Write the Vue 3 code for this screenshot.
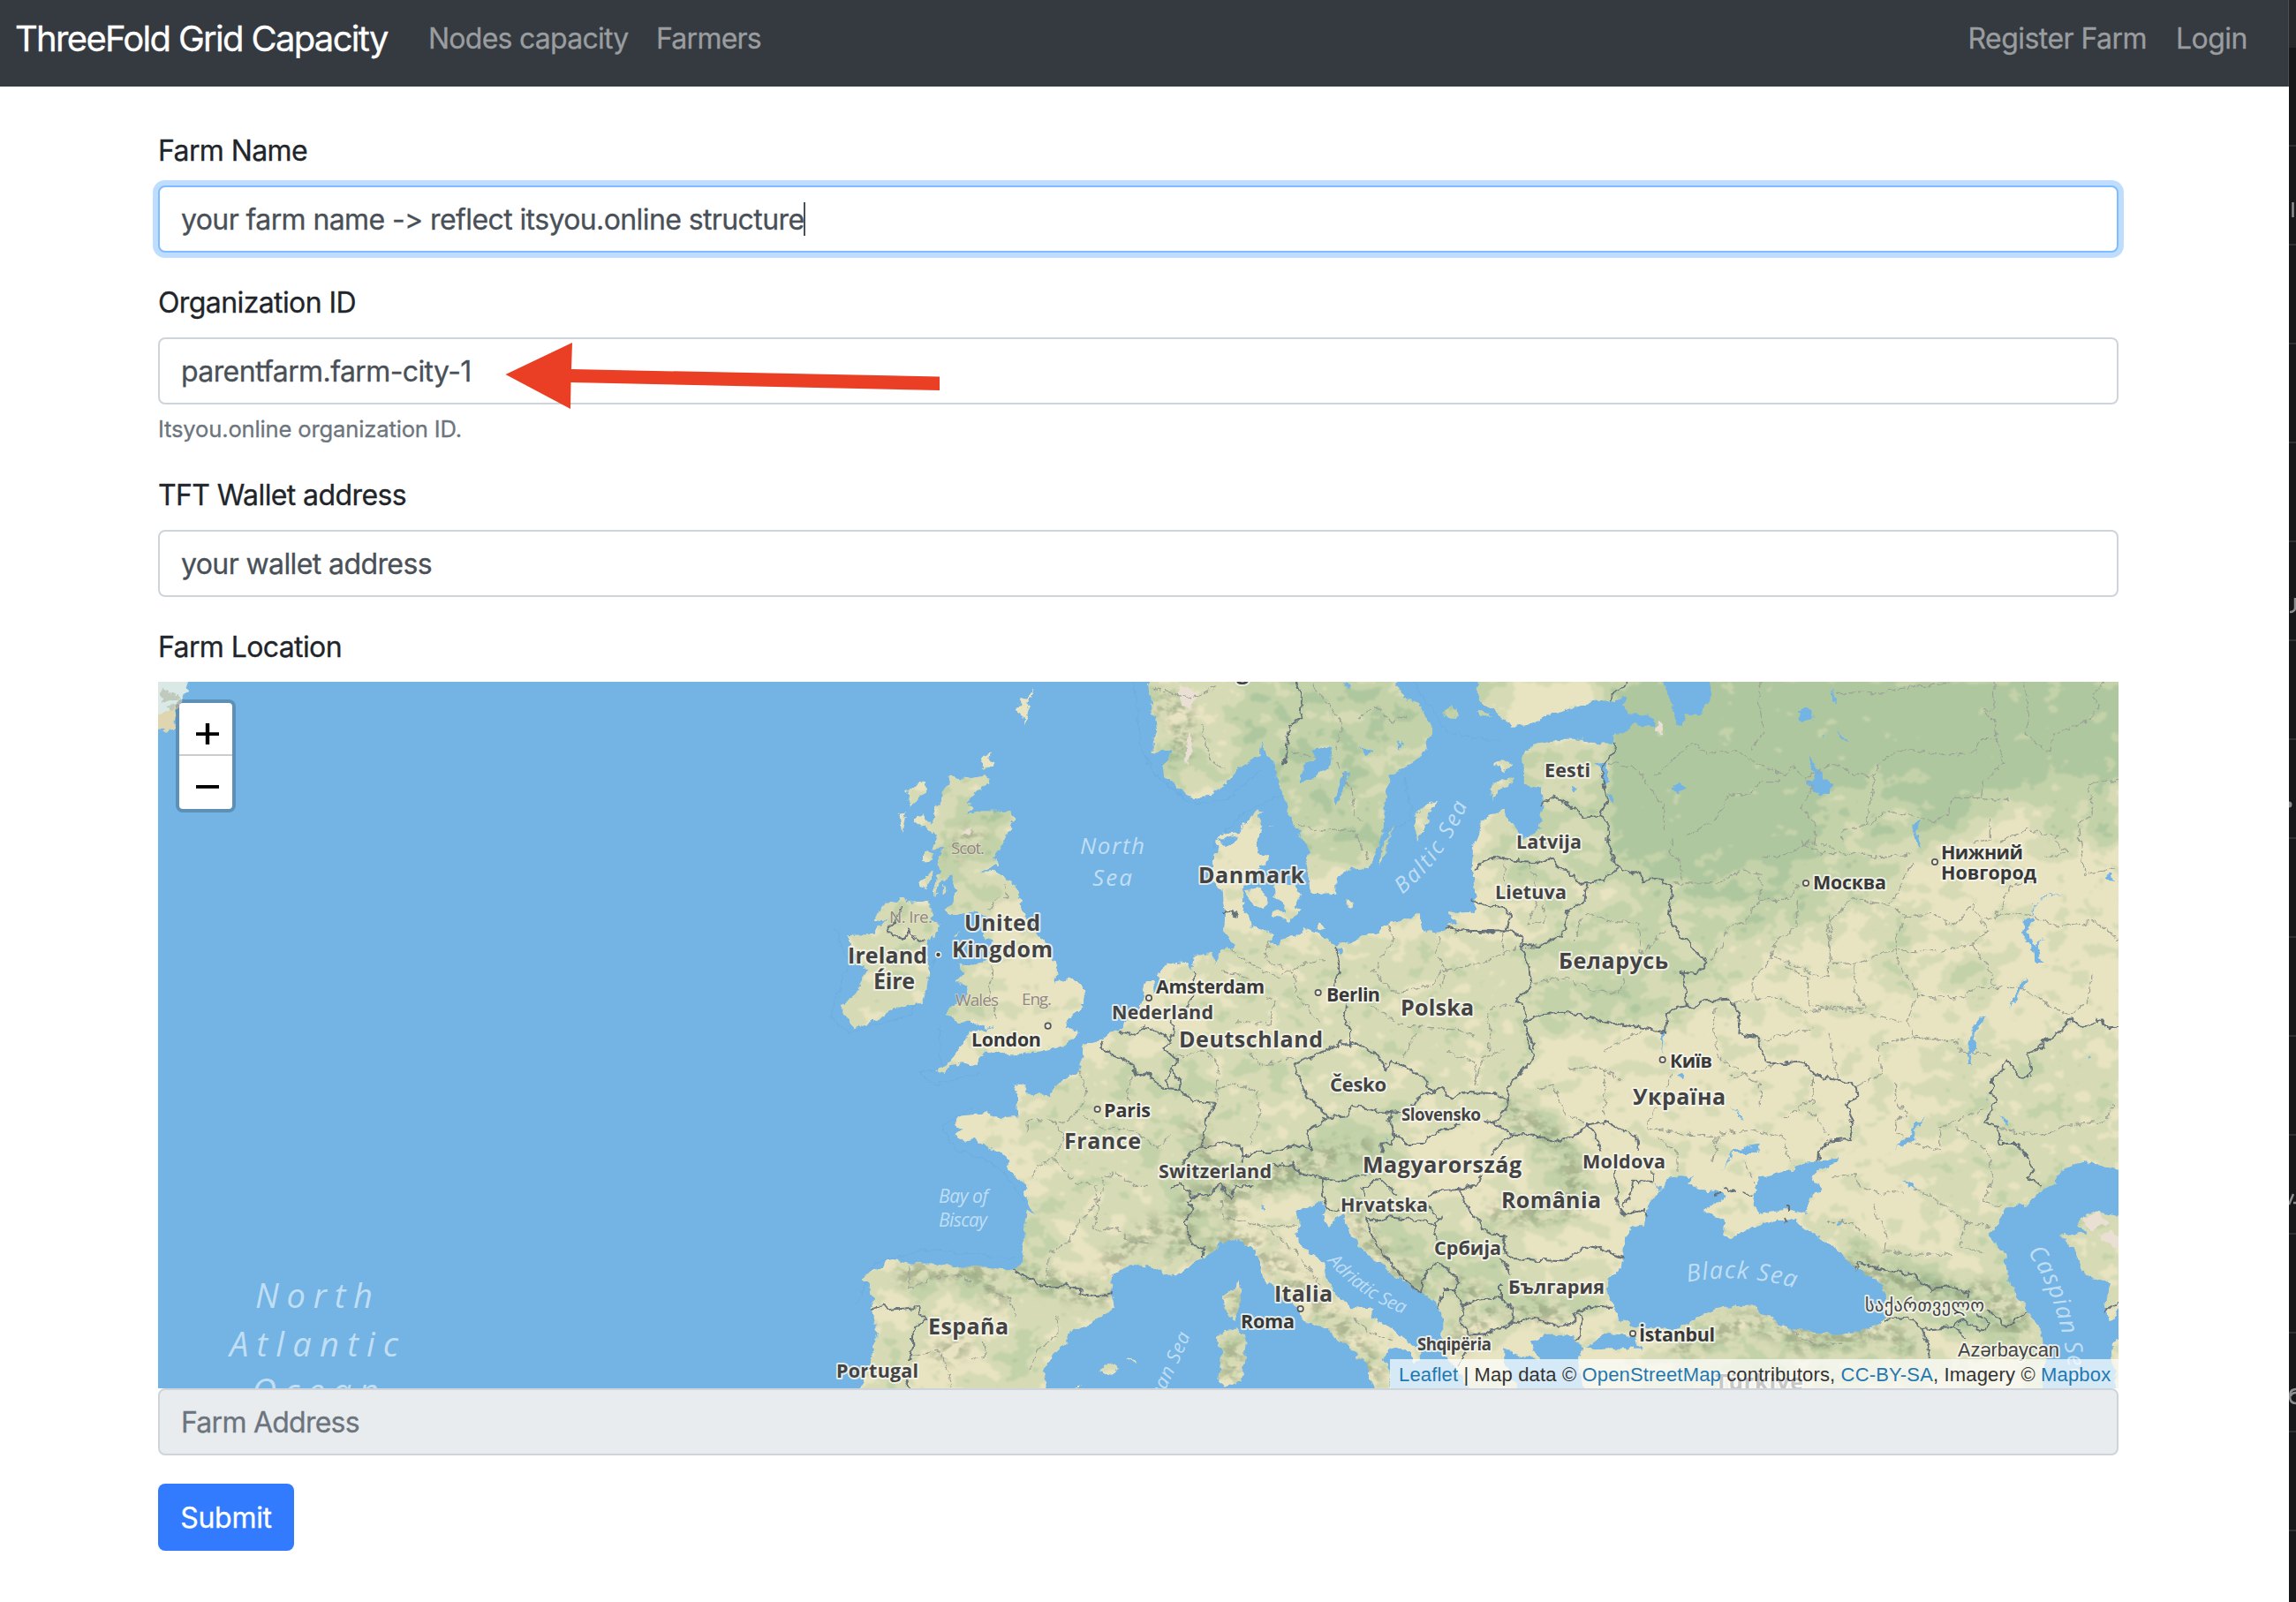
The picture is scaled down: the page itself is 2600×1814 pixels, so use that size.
<script setup>
// Map geometry is stored per survey tile, three units to a pixel.
const origins = {
  A: [930, 770], B: [1300, 770], C: [1660, 770], D: [2020, 770],
  E: [930, 1170], F: [1300, 1170], G: [1660, 1170], H: [2020, 1170],
}
function line(src) {
  let o = origins.A
  const out = []
  for (const tok of src.trim().split(/\s+/)) {
    if (origins[tok]) { o = origins[tok]; continue }
    const [x, y] = tok.split(',').map(Number)
    out.push(`${(o[0] + x / 3).toFixed(1)} ${(o[1] + y / 3).toFixed(1)}`)
  }
  return 'M' + out.join('L')
}
const area = (s) => line(s) + 'Z'
const pos = (t, x, y) => ({ x: origins[t][0] + x / 3, y: origins[t][1] + y / 3 })

const land = [
  // mainland
  `E 135,1215 150,1150 170,1110 180,1050 188,1020 178,970 170,935 180,905 160,870 165,850 143,832 165,810 210,797 215,775 250,765 290,782 370,778 430,788 480,797 540,790 600,800 655,803 680,775 690,710 695,640 697,600 725,620 700,570 690,540 700,520 665,495 640,465 630,420 605,398 570,388 520,360 485,365 460,345 480,330 460,315 452,297 480,280 530,275 565,260 580,275 598,290 670,280 665,215 650,172 688,175 695,205 740,208 780,212 790,180 830,155 875,130 887,100 885,42 950,22 980,0
   A 1020,1185 1040,1150 1085,1115 1095,1050 1105,1020 1125,1020 1130,1060 1150,1050 1145,990 1180,965 B 135,960 150,980 160,935 215,930 230,960 250,915 290,905 275,870 258,850 262,790 255,760 250,710 222,690 222,590 240,580 232,550 250,525 310,515 345,465 390,440 378,460 385,500 370,545 375,590 412,600 405,620 370,635 345,690 318,715 325,735 320,765 330,790 350,810 350,835 420,855 425,875 410,890 440,900 460,880 510,865 530,845 575,860 610,880 640,900 720,880 780,860 800,835 850,815 920,798 935,845 975,858 1010,850 1045,820 1030,810 1030,788 1110,785 1112,740 1100,640 1105,560 1125,530
   C 50,490 75,460 125,440 140,475 165,490 180,530 210,535 250,510 262,430 255,360 220,365 195,335 192,250 240,215 330,200 400,200 420,212 500,215 505,180 520,185 560,165 570,150 640,160 640,130 600,115 550,115 530,90 550,55 520,65 430,75 380,90 330,105 270,120 220,150 160,155 120,130 90,100 50,80 35,30 45,-10
   D 1150,-10 H 1150,1215 F 1100,1215 1040,1130 1000,1090 1000,1030 1000,940 985,935 970,900 930,885 870,845 840,830 800,790 760,765 720,720 690,690 680,650 660,620 640,630 615,660 595,630 605,595 590,570 540,590 500,605 520,650 500,680 520,725 570,755 600,790 610,830 640,890 690,930 770,935 755,965 800,990 880,1040 920,1080 925,1110 905,1120 890,1085 840,1065 820,1070 800,1110 820,1130 825,1215 770,1215 750,1170 750,1120 710,1100 680,1060 640,1040 610,1000 540,985 490,920 430,870 390,835 385,790 365,740 320,710 270,700 240,715 220,745 180,765 120,810 80,825 30,805 0,790
   E 1085,790 1040,790 990,825 985,880 995,930 940,975 850,1010 830,1050 790,1090 755,1150 775,1215`,
  // Scandinavia
  `A 1110,-10 1115,30 1120,100 1145,150 1130,190 1130,250 1190,230 1180,270 1160,290 1165,330 B 110,375 150,403 210,395 260,355 320,285 380,260 385,205 400,260 430,280 440,350 465,410 490,480 550,580 535,620 545,670 550,710 560,730 640,725 640,680 670,645 750,640 775,590 800,500 805,400 820,330 870,300 930,260 945,215 968,160 935,120 920,75 870,60 845,20 848,-10`,
  // Great Britain
  `A 435,325 480,335 565,322 568,350 530,380 500,410 515,435 495,460 545,445 640,447 655,470 635,520 610,570 585,600 600,625 540,655 590,650 640,680 665,710 685,790 740,870 765,890 790,950 800,990 790,1025 850,1012 895,1050 890,1110 840,1150 830,1180 875,1190 860,1220 800,1250 E 740,60 690,70 620,70 560,62 535,85 530,112 480,100 440,110 420,138 390,125 430,105 480,40 500,0 A 560,1190 600,1165 560,1185 520,1165 470,1160 420,1135 440,1110 500,1085 495,1040 455,1025 480,1000 465,965 500,970 560,955 585,890 545,870 570,810 530,785 440,800 425,780 460,720 445,680 450,660 400,690 390,740 385,720 400,650 395,600 415,570 375,575 390,540 375,500 385,460 380,430 410,410 410,380 430,355`,
  // Ireland
  `A 280,735 300,755 360,750 380,790 370,815 405,830 385,870 355,890 365,990 345,1100 250,1110 170,1165 110,1180 80,1140 65,1105 110,1080 130,1040 160,985 110,960 140,940 100,925 90,865 180,860 215,820 180,815 210,765 250,755`,
  'A 350,343 355,380 300,435 292,375 325,360', 'A 265,455 290,450 278,520 270,490', 'A 345,450 385,500 375,520 350,500 315,475',
  'A 345,585 385,590 375,615 345,612', 'A 380,648 375,680 345,705 335,680', 'A 415,690 428,715 412,725', 'A 475,855 460,880 455,870',
  'A 722,28 715,60 700,70 705,100 690,155 684,120 662,105 680,80 675,60 700,65', 'A 575,250 570,270 590,280 560,295 545,300 548,260', 'A 545,290 560,295 550,302',
  'B 985,410 950,420 910,455 905,510 912,542 945,500 955,450', 'B 832,490 810,580 790,628 788,590 815,530', 'B 675,745 700,765 698,777 670,765',
  'B 330,715 385,708 405,740 395,780 360,765 340,740', 'B 430,700 500,695 515,745 495,770 515,780 480,820 425,800 430,785 470,785 455,755 430,740',
  'B 1000,105 1030,85 1050,105 1045,130 1010,120', 'B 1120,105 1170,118 1130,122', 'B 600,850 580,820 575,845', 'B 425,495 410,498 415,502',
  'C 85,350 170,325 165,350 110,375 95,410 90,375', 'C 95,285 130,268 160,290 130,310',
  'F 310,835 318,900 295,980 265,950 255,890 300,865', 'F 300,1000 335,1050 320,1180 265,1200 240,1190 250,1070 225,1040 240,1020',
  'E 940,1145 985,1115 1012,1135 990,1165', 'E 1035,1108 1055,1103 1070,1118', 'E 885,1188 880,1200 860,1205', 'E 680,65 700,65 690,75',
]
const water = [
  // Black Sea, Azov, Marmara, Aegean, Caspian
  'G 690,490 730,487 770,490 755,510 800,530 860,540 885,552 830,590 805,605 850,625 880,640 870,685 900,700 960,665 1050,640 1120,630 1150,670 1200,690 1260,735 H 240,795 300,830 340,860 345,960 330,985 270,1010 200,1022 130,1020 30,1008 G 1060,985 1040,960 1000,950 980,925 860,930 790,960 730,1000 580,1000 520,970 500,920 480,880 495,820 530,795 540,700 560,650 605,660 615,580 670,530',
  'G 985,520 1000,490 1100,465 1150,440 1260,425 H 185,425 180,440 130,460 90,490 130,530 100,550 80,600 G 1150,612 1100,600 1050,602 1000,615 980,590 970,550',
  'G 410,1065 470,1020 560,1025 600,1070 520,1070 440,1075',
  'G 130,1060 160,1090 200,1100 250,1105 215,1050 270,1025 360,1025 370,1050 400,1060 380,1110 400,1215 180,1215 130,1120',
  'H 750,590 830,580 870,535 915,515 940,470 1010,437 1100,450 1150,460 1150,625 1060,605 1010,620 1000,655 1025,680 940,685 960,710 990,740 1020,820 1110,850 1090,920 1110,980 1150,900 1150,1040 1115,1050 1115,1110 1130,1215 880,1215 890,1110 880,1020 830,950 760,830 750,750 695,690 730,650',
  'C 660,-10 690,60 710,145 740,150 745,115 800,120 835,50 825,-10', 'C 435,285 480,280 488,340 465,355 460,310', 'C 480,385 505,400 500,422', 'C 700,370 725,350 748,370 720,388', 'C 358,360 372,365 364,385',
  'C 1130,100 1175,98 1182,130 1140,138', 'D 80,262 120,300 135,335 165,350 155,390 120,390 80,350 105,335', 'D 160,35 180,60 178,88', 'D 177,163 220,212 200,200', 'D 130,185 142,175 140,190',
  'B 565,235 625,230 620,290 570,330 515,352 535,280 560,275', 'B 670,305 685,320 660,380 638,432 635,405 655,330', 'B 720,235 765,240 740,255', 'B 845,205 870,215 855,238', 'B 665,10 695,15 680,28', 'B 635,905 660,915 655,935', 'B 240,540 300,530 290,560 260,570',
  'D 955,725 900,730 850,765 848,800 835,845 820,855 855,900 883,880 860,910 880,960 855,960 843,905 810,865 815,820 845,810 845,775 885,735', 'D 1080,670 1110,658 1137,680 1100,678', 'D 435,485 465,480 450,510 468,575 458,570 445,515',
  'D 825,1015 795,1085 768,1115 785,1080 810,1020', 'D 690,1150 665,1165 640,1205 655,1260 630,1260 635,1190 665,1147', 'H 635,0 645,0 655,50 635,70 640,105 628,105 625,70 645,45',
  'H 480,283 445,330 445,360 385,392 395,370 430,350 445,310', 'H 405,502 435,510 450,530 425,520', 'H 735,275 770,312 745,305', 'H 1030,72 1042,75 1035,88', 'H 688,225 700,228 692,235', 'H 178,645 200,640 190,655',
  'G 995,380 990,405 910,405 870,468 900,410 915,395', 'G 900,250 945,290 930,285', 'G 665,0 675,0 668,75', 'G 715,138 740,140 735,160', 'G 645,510 670,530 660,530',
  'F 388,580 398,580 395,605', 'F 810,350 815,365 805,368', 'C 1160,260 1175,275 1170,300',
]
const borders = [
  'B 500,0 525,60 520,130 480,160 468,220 470,270 455,292', 'B 255,790 280,790 305,800', 'B 635,900 652,980 632,1040', 'B 672,1100 668,1150 690,1190 690,1245',
  'F 495,108 560,75 640,45 650,28 690,45 700,30 780,75 810,125 825,95 870,110 940,155 965,200 910,225 890,265 820,270 690,245 680,280 615,285 540,215 515,150 495,108',
  'F 965,200 1000,185 1030,225 1070,200 1190,205 1225,240 1220,185 1310,85 1285,0', 'F 1225,240 1180,305 1140,300', 'F 1060,310 1000,330 950,350 940,375 880,375 835,345 820,300 825,270',
  'C 235,1255 200,1160 200,1110 170,1090 220,1045 215,980 190,900 190,870 145,850 0,853', 'B 1010,842 1100,855 1220,853',
  'C 20,745 80,765 135,775 150,800 140,850', 'C 190,903 250,905 290,880 330,865 345,790 400,750 410,690 470,680 510,635', 'C 30,650 50,620 100,603 240,620 290,605 310,635 350,650 390,692 410,690',
  'C 250,425 310,397 360,430 400,465 455,460', 'C 505,212 510,235 460,300 480,410 455,462 485,495 480,550 515,635 560,655 590,655 600,685 650,675 700,705 690,800 730,870 765,890 765,910 820,960 780,1000 730,990 745,1040 750,1105 775,1115 800,1090 900,1085 930,1140 925,1200 990,1210 1005,1260',
  'C 200,1160 250,1135 330,1130 400,1140 480,1165 590,1180 675,1200 680,1140 710,1110 750,1105', 'C 485,65 545,5', 'B 1260,0 1260,0',
  'G 1005,60 1020,100 1080,105 1145,95 1190,145 1260,155 H 245,180 250,215 215,245 235,310 220,360 155,365 120,400 118,432',
  'H 940,0 880,30 880,50 825,70 845,135 810,158 755,90 735,130 705,155 705,205 720,230 685,300 725,320 735,375 795,375 850,470 820,485 875,522', 'D 860,1258 880,1225 930,1205 975,1150 1020,1178 1045,1165 1080,1150 1095,1180 1145,1178',
  'H 240,795 260,780 350,810 440,820 500,870 570,860 630,880 625,900', 'H 345,972 420,965 470,1005 580,995 600,975 680,1010 695,985 660,955', 'H 690,940 760,1000 825,945', 'H 470,1005 490,1060 495,1110', 'H 580,995 620,1035', 'H 1137,910 1090,945',
  'E 655,803 690,825 760,860 820,862 830,850 890,885 940,895 995,885', 'E 172,940 215,915 225,940 330,930 335,955 355,968 308,1015 310,1060 300,1120', 'E 290,1175 300,1206',
  'E 952,25 960,55 1020,85 1060,110 1070,145 1105,135 1160,185 1215,190 1260,230 1335,240 1305,310 1290,395', 'A 1005,1195 1050,1205 1100,1180 1160,1200 1185,1225 1200,1180 1190,1150', 'E 1190,30 1165,50 1210,90 1185,125 1170,170 1185,190', 'E 1190,125 1225,165 1215,190', 'B 155,985 150,1090 130,1110',
  'A 275,770 245,830 220,845 245,870 280,880 300,850 325,888 350,885',
  'F 120,445 140,410 180,390 250,375 310,385 325,420 370,405 430,405 500,380 555,395 540,335 580,310 610,285', 'F 430,450 495,445 520,480 600,495 660,505 700,485 760,480', 'F 75,530 105,505 150,555 130,570 155,600 125,640 150,720 190,725 185,760', 'F 150,555 210,545 240,510 280,560 300,515 355,520', 'F 320,390 320,440',
  'F 835,345 830,375 790,380 800,410', 'F 590,495 595,560 610,600 650,598', 'F 740,555 730,525 785,490 850,550', 'F 950,555 1000,535 1060,530 1120,515 1130,480', 'F 1165,415 1190,380 1240,345 1180,305',
  'G 155,340 260,350 290,370 380,345 415,310 470,300 580,350 585,400', 'G 415,310 440,350 460,400', 'G 510,460 515,590 540,620 600,600 615,620', 'G 530,590 565,540 570,500 640,505 630,470',
  'F 1060,530 1090,600 1130,640 1135,665 1190,690 1215,690 1205,730 1240,765 1320,770 1410,775 1460,740 1510,725 1570,745 1620,765', 'F 1195,760 1235,820', 'G 120,850 120,900 155,940 155,985 240,970 310,995 370,985 370,950 430,925 500,930', 'G 370,950 400,960 385,1020 370,1045',
  'F 1240,985 1150,1020 1090,1025 1065,990 1070,920 1120,905 1200,898', 'F 745,665 745,625 780,640 820,625 950,640 975,655', 'F 745,665 790,730 860,830 930,885', 'F 955,585 975,625 995,625 975,655 980,700',
  'F 930,885 935,830 965,785 1000,785 1060,845 1035,870 1005,870 985,935', 'F 1035,870 1070,920', 'F 1080,1080 1050,1130',
]
const provinces = [
  'B 555,20 620,90 660,150 640,240', 'B 710,130 770,90 830,140 880,120', 'B 490,245 560,260', 'B 510,490 590,510 700,510 730,570 750,610', 'B 640,280 690,370 700,460 730,480', 'B 180,150 210,270 260,300', 'B 20,30 150,60 240,20',
  'B 280,910 340,960 440,1010 540,960 600,950', 'B 410,890 400,950 500,1000 500,1060 590,1170', 'B 815,830 830,890 760,990 840,1060 960,1040 1000,990 1140,960 1250,910', 'B 760,1110 850,1170 1060,1190 1110,1210', 'B 990,870 980,930 1010,990 1000,1050', 'B 1205,860 1205,930', 'B 250,990 330,1010 430,1100 410,1170 300,1160',
  'C 490,280 590,310 630,370 670,420 680,510', 'C 640,330 770,215 820,250 920,240 1000,290 1080,320', 'C 750,530 850,470 890,390 960,390 1000,350 1050,350 1110,295 1180,360', 'C 700,540 690,580 730,620 735,680', 'C 710,690 860,690 930,650 1000,660 1000,740 950,820 890,840 870,900 830,950', 'C 1000,0 995,60 1010,180 970,240',
  'C 1000,745 1100,745 1130,700 1110,690', 'C 1010,605 1100,590 1160,550 1250,565', 'C 1180,360 1140,430 1190,500 1185,560', 'C 1130,750 1120,840 1050,890 1040,950 970,1020 980,1085 900,1100', 'C 1050,940 1160,990 1230,1010 1240,800', 'C 980,1085 1060,1080 1160,1130 1250,1110', 'C 850,1110 840,1200', 'C 1010,1220 1100,1200 1180,1180', 'C 410,790 480,820 590,825 595,930 680,850', 'C 390,810 370,890', 'C 210,620 235,670 240,760 210,830 270,820 260,760', 'C 130,620 130,700', 'C 220,1030 330,1010 420,1050 520,1065 540,1010', 'C 470,1260 600,1190', 'C 80,1260 80,1120 165,1100',
  'D 180,40 320,45 420,25 560,10', 'D 715,0 710,100 680,100 715,140 725,200 670,200 650,245 560,255 440,240 380,240 320,290 310,330 240,320 170,285 70,330', 'D 725,200 750,285 680,340 670,400 760,410', 'D 815,0 830,90 820,180 900,245 920,180 1020,150 1075,90 1050,60 1090,0', 'D 670,400 570,400 560,450 510,480 440,460 340,450 290,490 200,510 200,560', 'D 310,330 290,430 280,490', 'D 60,550 130,590 250,590 330,605 430,590', 'D 435,630 360,765 410,800 390,870', 'D 355,765 230,740 150,830 160,960 240,965 350,920 540,920 650,895', 'D 410,810 500,790 580,835 640,760 690,850 640,900 690,970 720,1050', 'D 700,470 700,540 640,555', 'D 740,550 820,510 920,530 960,590 880,600', 'D 1137,340 1040,350 1045,460 1000,490 1020,660 1137,640', 'D 680,810 780,790 840,800 940,840 1060,820 1137,880', 'D 385,870 385,960 455,1060 420,1160 450,1220 590,1220', 'D 455,1075 600,1080 660,1045 800,1045 970,1140 1030,1100 1045,1000', 'D 240,970 240,1060 280,1120 90,1110 80,1010 0,970', 'D 120,1120 200,1120 400,1160',
  'D 720,810 770,700 850,680', 'E 875,130 900,190 895,225 870,270 830,300 700,295 700,340', 'E 990,470 960,490 950,560 880,640 840,710 775,745 770,830', 'E 720,490 730,450 790,430 870,510 940,510', 'E 785,430 830,360 790,300', 'E 890,280 960,330 1040,320 1140,385 1190,350', 'E 930,510 940,610 920,670 1000,660 1050,705 1120,715', 'E 1000,470 1060,520 1110,520', 'E 300,790 300,870 380,830 470,820 510,850', 'E 560,870 640,900 660,960', 'E 310,1090 400,1080 430,1140 440,1200', 'E 800,960 800,1030 750,1060 700,1150', 'E 550,1050 560,1090 510,1110', 'E 1060,150 1030,210 1050,230',
  'F 100,80 200,60 240,110 230,230', 'F 350,70 380,110 500,80', 'F 240,190 300,170 370,200 380,290 340,380', 'F 250,570 260,630 400,650 510,655', 'F 500,740 540,790 590,860', 'F 700,970 760,1020 830,1040', 'F 910,0 870,80', 'F 1020,60 1110,100 1120,180', 'F 380,650 440,690 510,745',
  'G 245,190 300,180 340,280 410,300', 'G 350,120 450,115 530,160', 'G 470,120 470,280', 'G 610,320 720,340 850,350 840,440', 'G 620,310 640,260 700,140', 'G 840,440 860,340 970,330 1080,350 1100,440', 'G 650,350 720,410 720,470', 'G 840,0 860,80 1000,170 1000,250', 'G 950,440 980,510', 'G 900,150 1000,130 1060,100', 'G 1180,150 1180,250', 'G 30,180 60,80 130,60',
  'H 100,150 100,220 0,290', 'H 90,260 150,350', 'H 245,180 330,140 320,40 450,10 590,30 600,70 700,70', 'H 380,170 380,230 420,270 380,300 380,340 430,370 530,400 530,320 600,290 680,260', 'H 580,320 690,400 710,500 680,570 740,590', 'H 160,490 240,480 260,520 320,545 410,540', 'H 440,530 510,560 560,600 620,640 700,660', 'H 620,640 600,720 680,750', 'H 300,580 350,690 340,740 450,750 570,750', 'H 730,325 880,350 960,310 1090,300 1120,240', 'H 150,640 230,640 280,690', 'H 30,1010 100,1060 200,1050', 'H 150,0 185,150',
  'A 570,780 600,740 630,735 620,690', 'A 580,970 570,1060 595,1150',
]

// Vegetation density, 0 (open) to 1 (dense)
const veg = [
  ['M1290 760H1720L1640 850 1560 1010 1480 1010 1400 880 1310 900Z', 0.66], ['M1300 760h100v90l-50 20-40-50Z', 0.36], ['M1450 980h110v40h-110Z', 0.12], ['M1560 850h80v50h-90Z', 0.45],
  ['M1690 840L1830 850 1850 1000 1690 1020Z', 0.48], ['M1820 760H2420V880L2280 900 2200 950 2100 960 1900 1010 1820 960Z', 0.95], ['M1830 1000L2100 960 2060 1060 1900 1060Z', 0.68], ['M2060 900L2180 880 2140 1020 2040 1030Z', 0.58], ['M2300 870h100v90h-90Z', 0.62],
  ['M1740 1020L1920 1010 1990 1100 1900 1160 1730 1170Z', 0.5], ['M1730 1120h170v40h-170Z', 0.62], ['M2210 1070h50v60h-60Z', 0.5], ['M2120 1040l60-10-30 90h-20Z', 0.55],
  ['M1370 1060L1740 1060 1730 1230 1500 1280 1330 1270Z', 0.36], ['M1240 1190L1480 1200 1400 1330 1330 1400 1210 1380 1140 1260Z', 0.38], ['M1300 1180h60v160h-60Z', 0.48], ['M1480 1270h110v70h-110Z', 0.62], ['M1380 1310h130v40h-130Z', 0.58], ['M1330 1330h60v100h-50Z', 0.52],
  ['M1500 1340L1720 1400 1700 1500 1620 1490Z', 0.54], ['M1690 1220L1760 1260 1800 1330 1790 1380 1700 1390 1690 1370 1760 1350 1720 1290Z', 0.66], ['M1700 1440h110v60h-110Z', 0.5], ['M1440 1430L1570 1540 1560 1572 1480 1480 1390 1400Z', 0.5],
  ['M2210 1180H2400V1572H2300L2260 1450 2190 1370 2180 1260Z', 0.37], ['M2050 1390L2150 1420 2260 1460 2300 1540 2140 1480Z', 0.7], ['M1900 1480L2130 1500 2260 1560 1870 1572Z', 0.46],
  ['M1050 870L1150 900 1130 1040 1060 1040Z', 0.5], ['M1090 920h50v30h-60Z', 0.7], ['M1060 1070h70v90h-60Z', 0.4], ['M950 1000h120v170h-120Z', 0.38], ['M970 1430L1150 1430 1260 1470 1250 1500 1150 1480 1030 1480Z', 0.5], ['M980 1500h60v72h-60Z', 0.4], ['M1120 1520l80-40-20 92h-50Z', 0.54], ['M1155 1370l40-10v60l-40 30Z', 0.62], ['M1380 1450h30v110h-30Z', 0.54], ['M1230 1400L1340 1400 1330 1450Z', 0.46],
]
const ridges = [
  'F 100,780 150,560 260,540 400,480 600,420 760,380', 'F 130,600 200,560 330,520 480,490 560,500', 'F 200,740 310,690 420,770 560,900 700,1040 780,1180', 'F 700,560 760,720 860,800 960,860', 'F 1050,820 1150,960 1040,1060',
  'E 660,810 800,850 900,890 980,880', 'E 260,830 400,800 540,810 620,920', 'E 380,1100 500,1050', 'E 1150,640 1050,720 960,800', 'E 1180,700 1220,640', 'G 130,250 300,360 370,480 360,590 230,610 80,620',
  'G 150,930 350,960', 'H 220,740 300,810 420,850 560,880 700,880 820,990', 'H 20,1060 180,1040 340,1010 440,1080', 'H 700,960 830,1010', 'G 700,1080 950,980 1240,1050', 'B 20,60 120,120 110,260', 'A 430,600 540,510', 'F 290,870 280,960', 'F 290,1040 280,1180', 'F 300,640 150,300',
]

// text, left, right, baseline, size, kind
const labels = [
  ['Norge', 1354, 1429, 768, 25, 'country'], ['United', 1092, 1178, 1053, 25, 'country'], ['Kingdom', 1078, 1192, 1083, 25, 'country'], ['Ireland', 960, 1050, 1090, 25, 'country'], ['Éire', 989, 1036, 1119, 25, 'country'], ['Danmark', 1357, 1477, 999, 25, 'country'],
  ['Deutschland', 1335, 1498, 1185, 25, 'country'], ['Polska', 1586, 1669, 1149, 25, 'country'], ['Беларусь', 1765, 1889, 1096, 25, 'country'], ['France', 1205, 1292, 1300, 25, 'country'], ['Magyarország', 1543, 1723, 1327, 25, 'country'], ['Italia', 1443, 1509, 1473, 25, 'country'],
  ['România', 1700, 1813, 1367, 25, 'country'], ['Україна', 1849, 1954, 1250, 25, 'country'], ['España', 1051, 1142, 1510, 25, 'country'], ['Türkiye', 1942, 2042, 1573, 25, 'country'],
  ['Nederland', 1259, 1374, 1153, 21.5, 'country'], ['Latvija', 1717, 1791, 960, 21.5, 'country'], ['Lietuva', 1693, 1774, 1017, 21.5, 'country'], ['Eesti', 1749, 1801, 879, 21.5, 'country'], ['Switzerland', 1312, 1440, 1333, 21.5, 'country'], ['Česko', 1506, 1570, 1235, 22, 'country'],
  ['Slovensko', 1587, 1677, 1268, 19, 'country'], ['Hrvatska', 1518, 1617, 1371, 21.5, 'country'], ['Србија', 1624, 1700, 1420, 21.5, 'country'], ['Shqipëria', 1605, 1689, 1528, 19, 'country'], ['Moldova', 1792, 1886, 1322, 21.5, 'country'], ['България', 1708, 1817, 1464, 21.5, 'country'], ['Portugal', 947, 1040, 1559, 21.5, 'country'],
  ['საქართველო', 2112, 2247, 1484, 20, 'country alt'], ['Azərbaycan', 2217, 2332, 1535, 22, 'country alt'],
  ['London', 1100, 1179, 1184, 21.5, 'city'], ['Amsterdam', 1309, 1432, 1124, 21.5, 'city'], ['Berlin', 1502, 1563, 1133, 21.5, 'city'], ['Москва', 2053, 2136, 1006, 21.5, 'city'], ['Нижний', 2198, 2291, 972, 21.5, 'city'], ['Новгород', 2198, 2306, 995, 21.5, 'city'], ['Paris', 1250, 1303, 1264, 21.5, 'city'], ['Roma', 1405, 1466, 1503, 21.5, 'city'], ['Київ', 1891, 1939, 1208, 21.5, 'city'], ['İstanbul', 1856, 1942, 1518, 21.5, 'city'],
  ['Scot.', 1077, 1115, 966, 19, 'region'], ['N. Ire.', 1007, 1056, 1044, 19, 'region'], ['Wales', 1082, 1131, 1138, 19, 'region'], ['Eng.', 1157, 1191, 1137, 19, 'region'],
  ['North', 1223, 1296, 966, 26, 'sea'], ['Sea', 1237, 1282, 1002, 26, 'sea'], ['Bay of', 1063, 1119, 1361, 21, 'sea'], ['Biscay', 1063, 1118, 1388, 21, 'sea'], ['North', 289, 422, 1480, 38, 'sea'], ['Atlantic', 260, 451, 1535, 38, 'sea'], ['Ocean', 285, 429, 1588, 39, 'sea'],
]
const curves = [
  { id: 'baltic', d: 'M1588 1013Q1640 970 1664 905', text: 'Baltic Sea', size: 25, len: 127 },
  { id: 'adriatic', d: 'M1503 1428Q1540 1470 1590 1488', text: 'Adriatic Sea', size: 21, len: 106 },
  { id: 'black', d: 'M1911 1452Q1970 1440 2034 1459', text: 'Black Sea', size: 27, len: 123 },
  { id: 'caspian', d: 'M2296 1418Q2338 1476 2347 1590', text: 'Caspian Sea', size: 27, len: 156 },
  { id: 'medit', d: 'M1236 1700Q1306 1616 1348 1512', text: 'Mediterranean Sea', size: 22, len: 196, offset: 24 },
]
const cities = [['A', 770, 1175], ['A', 1113, 1080], ['B', 578, 1062], ['D', 75, 690], ['D', 513, 618], ['E', 938, 258], ['F', 518, 936], ['G', 668, 90], ['G', 567, 1020]].map((c) => pos(...c))
</script>

<template>
  <div class="screen">
    <div class="page">
      <nav class="navbar">
        <a class="brand">ThreeFold Grid Capacity</a>
        <a class="link nodes">Nodes capacity</a>
        <a class="link farmers">Farmers</a>
        <span class="grow"></span>
        <a class="link register">Register Farm</a>
        <a class="link login">Login</a>
      </nav>
      <main class="form">
        <div class="group">
          <label>Farm Name</label>
          <div class="control focus"><span>your farm name -&gt; reflect itsyou.online structure</span><i class="caret"></i></div>
        </div>
        <div class="group">
          <label>Organization ID</label>
          <div class="control"><span>parentfarm.farm-city-1</span></div>
          <small>Itsyou.online organization ID.</small>
          <svg class="arrow" width="496" height="80" viewBox="570 386 496 80"><path d="M572.5 424L648 388 647 418 1064 426.500V442L646.500 433 646 463Z" fill="#ea3f24" /></svg>
        </div>
        <div class="group">
          <label>TFT Wallet address</label>
          <div class="control"><span>your wallet address</span></div>
        </div>
        <div class="group">
          <label>Farm Location</label>
          <div class="map">
            <svg class="tiles" width="2220" height="800" viewBox="179 772 2220 800">
              <defs>
                <filter id="rough" filterUnits="userSpaceOnUse" x="170" y="760" width="2240" height="820">
                  <feTurbulence type="fractalNoise" baseFrequency="0.11" numOctaves="3" seed="4" />
                  <feDisplacementMap in="SourceGraphic" scale="9" xChannelSelector="R" yChannelSelector="G" />
                </filter>
                <filter id="terrain" filterUnits="userSpaceOnUse" x="170" y="760" width="2240" height="820" color-interpolation-filters="sRGB">
                  <feGaussianBlur in="SourceGraphic" stdDeviation="14" result="base" />
                  <feTurbulence type="fractalNoise" baseFrequency="0.035 0.045" numOctaves="4" seed="11" />
                  <feColorMatrix values="1 0 0 0 0  1 0 0 0 0  1 0 0 0 0  0 0 0 0 1" result="noise" />
                  <feComposite in="base" in2="noise" operator="arithmetic" k1="0" k2="1" k3="0.85" k4="-0.42" />
                  <feComponentTransfer>
                    <feFuncR type="discrete" tableValues=".91 .84 .77 .69" />
                    <feFuncG type="discrete" tableValues=".894 .859 .827 .784" />
                    <feFuncB type="discrete" tableValues=".757 .71 .663 .624" />
                  </feComponentTransfer>
                  <feGaussianBlur stdDeviation="1" />
                </filter>
                <filter id="relief" filterUnits="userSpaceOnUse" x="170" y="760" width="2240" height="820" color-interpolation-filters="sRGB">
                  <feGaussianBlur in="SourceGraphic" stdDeviation="7" result="b" />
                  <feTurbulence type="fractalNoise" baseFrequency="0.07 0.1" numOctaves="3" seed="3" />
                  <feColorMatrix values="0 0 0 0 0  0 0 0 0 0  0 0 0 0 0  4.500 0 0 0 -1.9" result="n" />
                  <feComposite in="b" in2="n" operator="in" />
                </filter>
                <mask id="landmask" maskUnits="userSpaceOnUse" x="170" y="760" width="2240" height="820">
                  <g filter="url(#rough)">
                    <path v-for="(s, i) in land" :key="i" :d="area(s)" fill="#fff" />
                    <path v-for="(s, i) in water" :key="'w' + i" :d="area(s)" fill="#000" />
                  </g>
                </mask>
                <path v-for="c in curves" :id="c.id" :key="c.id" :d="c.d" />
              </defs>
              <rect x="179" y="772" width="2220" height="800" fill="#73b4e5" />
              <g fill="none" stroke="#69a9dc" stroke-width="1.2" opacity=".6" filter="url(#rough)">
                <path d="M1284 772L1293 850 1310 880 1350 910 1390 905 1430 870M945 1050L960 1090 940 1150 960 1170 1030 1150 1066 1070M1064 1160L1066 1210 1040 1215 1060 1228 1110 1215M1100 1255L1067 1275 1080 1300 1130 1320 1160 1360M970 1480L990 1430 1050 1415 1150 1425M1370 960L1410 920 1450 900M1600 772L1640 830 1700 840M1540 950L1600 930 1590 880" />
              </g>
              <g mask="url(#landmask)">
                <g filter="url(#terrain)">
                  <rect x="120" y="700" width="2340" height="920" fill="#262626" />
                  <path v-for="(v, i) in veg" :key="i" :d="v[0]" :fill="`rgb(${v[1] * 255},${v[1] * 255},${v[1] * 255})`" />
                </g>
                <g filter="url(#relief)" fill="none" stroke="#7f8d6b" stroke-width="24" opacity=".5">
                  <path v-for="(s, i) in ridges" :key="i" :d="line(s)" />
                </g>
                <g fill="#e9dfd2" filter="url(#rough)">
                  <path d="M2356 1380l20-8 10 12-18 10ZM2376 1400l16-6 12 12-4 8ZM1336 775l20 10-6 20-14-8ZM1345 830l6 20-8 18ZM1088 944l12-6-2 8ZM1876 815l8 5-2 12-8-4Z" />
                </g>
              </g>
              <g fill="#dbe9e6" filter="url(#rough)">
                <path d="M170 765h47l-8 22-12 20-18 6h-9Z" /><path d="M170 814l30-14-4 26-10 2-16-6Z" fill="#dfd5b0" /><path d="M184 778l20 14-22 4ZM188 800l16-4-8 8Z" fill="#bfcabc" />
              </g>
              <g fill="none" filter="url(#rough)" stroke-linejoin="round">
                <path v-for="(s, i) in provinces" :key="i" :d="line(s)" stroke="#9da297" stroke-width="1.3" stroke-dasharray="9 2.500" />
                <path v-for="(s, i) in borders" :key="'b' + i" :d="line(s)" stroke="#65717a" stroke-width="2" />
                <path d="M1942 1354l8-3M1953 1345l12 3M1974 1350l8 5M2024 1364v9M2020 1378l3 8" stroke="#65717a" stroke-width="2" />
              </g>
              <text v-for="(l, i) in labels" :key="i" :class="l[5]" :x="l[1]" :y="l[3] + 0.7" :font-size="l[4]" :textLength="l[2] - l[1]">{{ l[0] }}</text>
              <text v-for="c in curves" :key="c.id" class="sea" :font-size="c.size"><textPath :href="'#' + c.id" :startOffset="c.offset || 0" :textLength="c.len">{{ c.text }}</textPath></text>
              <circle v-for="(c, i) in cities" :key="i" :cx="c.x" :cy="c.y" r="3.200" fill="#efeee6" stroke="#555" stroke-width="1.700" />
              <circle cx="1062.500" cy="1081" r="3" fill="#444" stroke="#eef0ea" stroke-width="1.500" />
            </svg>
            <div class="zoom">
              <button><svg width="26" height="26" viewBox="0 0 26 26"><path d="M0 11.200h10.800V1h4.400v10.200H26v3.800H15.200v10h-4.400V15H0Z" /></svg></button>
              <button><svg width="26" height="26" viewBox="0 0 26 26"><path d="M0 11h26v3.800H0Z" /></svg></button>
            </div>
            <div class="credit"><a>Leaflet</a> | Map data © <a>OpenStreetMap</a> contributors, <a>CC-BY-SA</a>, Imagery © <a>Mapbox</a></div>
          </div>
          <div class="control address"><span>Farm Address</span></div>
        </div>
        <button class="submit">Submit</button>
      </main>
    </div>
    <aside class="behind">
      <svg width="8" height="1814" viewBox="0 0 8 1814">
        <rect width="8" height="54" fill="#27282a" />
        <path v-for="n in 15" :key="n" :d="`M0 ${53 + n * 112}H8`" stroke="#303134" stroke-width="2" />
        <g fill="none" stroke="#8c8d8f" stroke-width="2.500">
          <path d="M4.500 229v17M7 677v11q0 5-6 5M0 1364l5-12M5 1362h3M8 1573q-7 0-7 8 0 8 7 8M2 1581q1-4 6-4" />
        </g>
        <circle cx="0" cy="911" r="3.500" fill="#8c8d8f" />
      </svg>
    </aside>
  </div>
</template>

<style>
html, body { margin: 0; background: #fff; }
</style>

<style scoped>
.screen { display: flex; width: 2600px; height: 1814px; overflow: hidden; font-family: Inter, "Liberation Sans", sans-serif; font-size: 32px; line-height: 48px; color: #212529; white-space: nowrap; -webkit-text-stroke: 0.3px currentColor; }
.page { width: 2592px; background: #fff; }
.behind { width: 8px; background: #17181a; }
.behind svg { display: block; }
.navbar { box-sizing: border-box; height: 98px; padding: 1px 46px 12px 17px; display: flex; align-items: center; background: #343a40; color: #9a9d9f; border-right: 1px solid #4b5055; }
.brand { font-size: 40px; color: #fff; width: 468px; letter-spacing: -1.7px; }
.nodes { width: 258px; }
.link { letter-spacing: -0.75px; }
.grow { flex: 1; }
.register { margin-right: 33px; letter-spacing: -0.55px; }
.login { letter-spacing: -0.5px; }
.form { width: 2220px; margin-left: 179px; padding-top: 48px; }
.group { position: relative; margin-bottom: 32px; }
label { display: block; box-sizing: border-box; height: 48px; padding-top: 1px; margin-bottom: 16px; letter-spacing: -0.6px; }
.control { box-sizing: border-box; height: 76px; display: flex; align-items: center; padding: 2px 24px 0; border: 2px solid #ced4da; border-radius: 8px; color: #495057; background: #fff; letter-spacing: -0.6px; }
.focus { border-color: #80bdff; box-shadow: 0 0 0 6px #bfdeff; }
.caret { width: 2px; height: 38px; margin-top: -2px; background: #495057; }
small { display: block; box-sizing: border-box; margin-top: 8px; height: 38px; padding-top: 1px; line-height: 38px; font-size: 25.6px; color: #6c757d; letter-spacing: -0.17px; }
.arrow { position: absolute; left: 391px; top: 68px; }
.map { position: relative; height: 800px; overflow: hidden; -webkit-text-stroke: 0; }
.tiles { display: block; }
.tiles text { font-family: "Open Sans", "Noto Sans", "DejaVu Sans", sans-serif; paint-order: stroke; stroke-linejoin: round; }
.country { font-weight: 700; fill: #434343; stroke: rgba(246, 246, 238, 0.85); stroke-width: 4px; }
.city { font-weight: 700; fill: #383838; stroke: rgba(246, 246, 238, 0.85); stroke-width: 4px; }
.tiles .alt { font-family: "Liberation Sans", "DejaVu Sans", sans-serif; font-weight: 400; }
.region { fill: #94867f; stroke: rgba(240, 238, 220, 0.5); stroke-width: 2px; }
.sea { font-style: italic; fill: #c0def4; }
.zoom { position: absolute; left: 20px; top: 20px; width: 60px; border: 4px solid rgba(0, 0, 0, 0.2); border-radius: 8px; background: #fff; background-clip: padding-box; }
.zoom button { width: 60px; height: 60px; display: flex; align-items: center; justify-content: center; border: 0; border-bottom: 2px solid #ccc; padding: 12px 0 0 3px; background: none; }
.zoom button:last-child { border-bottom: 0; padding-top: 10px; }
.credit { position: absolute; right: 0; bottom: 0; box-sizing: border-box; width: 825px; height: 33px; padding: 0 10px; line-height: 35px; background: rgba(255, 255, 255, 0.7); font-family: "Liberation Sans", sans-serif; font-size: 22px; letter-spacing: 0.16px; color: #333; }
.credit a { color: #2478b0; }
.address { background: #e9ecef; color: #6c757d; letter-spacing: -0.75px; }
.submit { display: block; width: 154px; height: 76px; padding: 2px 0 0; border: 0; border-radius: 8px; background: #327bff; color: #fff; font: inherit; letter-spacing: -0.3px; }
</style>
